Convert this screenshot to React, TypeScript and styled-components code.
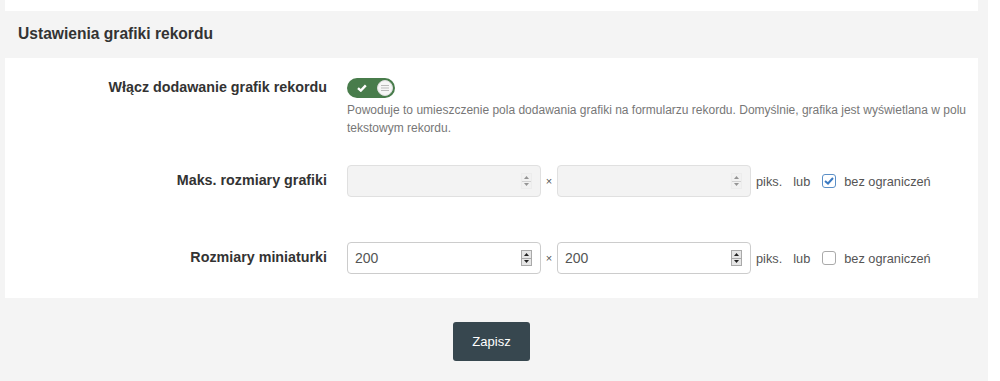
import styled, { createGlobalStyle } from 'styled-components';

const GlobalStyle = createGlobalStyle`
  html, body {
    margin: 0;
    padding: 0;
    background: #fff;
    font-family: "Liberation Sans", Arial, sans-serif;
  }
`;

const Page = styled.div`
  width: 988px;
  height: 381px;
  background: #f4f4f4;
  box-sizing: border-box;
  padding: 0 10px 0 5px;
`;

const TopPanel = styled.div`
  height: 11px;
  background: #fff;
`;

const SectionTitle = styled.h3`
  margin: 0;
  height: 47px;
  line-height: 45px;
  padding-left: 13px;
  font-size: 15.6px;
  font-weight: bold;
  color: #333;
`;

const Panel = styled.div`
  background: #fff;
  padding: 20px 10px 24px 0;
  display: grid;
  grid-template-columns: 342px 1fr;
`;

const Label = styled.div<{ $top: number }>`
  text-align: right;
  padding-right: 20px;
  padding-top: ${(p) => p.$top}px;
  font-size: 14.3px;
  font-weight: bold;
  color: #333;
`;

const Control = styled.div<{ $mt?: number }>`
  margin-top: ${(p) => p.$mt ?? 0}px;
`;

const Toggle = styled.div`
  width: 48px;
  height: 20px;
  border-radius: 10px;
  background: #487c4b;
  display: flex;
  align-items: center;
  justify-content: space-between;
  padding: 0 2px 0 10px;
  box-sizing: border-box;
`;

const Knob = styled.div`
  width: 16px;
  height: 16px;
  border-radius: 50%;
  background: #f6f6f6;
  border: 1px solid #ddd;
  box-sizing: border-box;
  display: flex;
  align-items: center;
  justify-content: center;
`;

const Help = styled.div`
  margin-top: 3px;
  font-size: 12px;
  line-height: 18px;
  color: #777;
  max-width: 622px;
`;

const SizeRow = styled.div`
  display: flex;
  align-items: center;
  font-size: 12.75px;
  color: #555;
`;

const InputBox = styled.div<{ $disabled?: boolean }>`
  width: 194px;
  height: 32px;
  box-sizing: border-box;
  border: 1px solid ${(p) => (p.$disabled ? '#e0e0e0' : '#ccc')};
  border-radius: 4px;
  background: ${(p) => (p.$disabled ? '#f3f3f3' : '#fff')};
  display: flex;
  align-items: center;
  padding: 0 8px 0 7px;
`;

const Field = styled.input`
  flex: 1;
  min-width: 0;
  border: none;
  outline: none;
  background: transparent;
  font-family: "Liberation Sans", Arial, sans-serif;
  font-size: 14px;
  color: #555;
  padding: 0;
`;

const Spinner = styled.div<{ $disabled?: boolean }>`
  width: 11px;
  height: 16px;
  box-sizing: border-box;
  border: 1px solid ${(p) => (p.$disabled ? '#e4e4e4' : '#a9a9a9')};
  background: ${(p) => (p.$disabled ? '#f0f0f0' : '#e6e6e6')};
  display: flex;
  flex-direction: column;
  opacity: ${(p) => (p.$disabled ? 0.45 : 1)};

  span {
    flex: 1;
    display: flex;
    align-items: center;
    justify-content: center;
  }

  span + span {
    border-top: 1px solid #a9a9a9;
  }
`;

const Times = styled.span`
  width: 16px;
  text-align: center;
  font-size: 11px;
  color: #555;
`;

const Unit = styled.span<{ $ml: number }>`
  margin-left: ${(p) => p.$ml}px;
`;

const Check = styled.div<{ $checked?: boolean }>`
  width: 14px;
  height: 14px;
  box-sizing: border-box;
  margin: 0 8px 0 12px;
  border: 1px solid ${(p) => (p.$checked ? '#5b8fc7' : '#aaa')};
  border-radius: 3px;
  background: #fff;
  display: flex;
  align-items: center;
  justify-content: center;
`;

const Footer = styled.div`
  display: flex;
  justify-content: center;
  padding-top: 24px;
`;

const SaveButton = styled.button`
  width: 77px;
  height: 39px;
  border: none;
  border-radius: 3px;
  background: #37474f;
  color: #fff;
  font-family: "Liberation Sans", Arial, sans-serif;
  font-size: 13px;
`;

function SpinnerIcon({ disabled }: { disabled?: boolean }) {
  return (
    <Spinner $disabled={disabled}>
      <span>
        <svg width="5" height="3" viewBox="0 0 5 3"><path d="M0 3 L2.5 0 L5 3 Z" fill="#222" /></svg>
      </span>
      <span>
        <svg width="5" height="3" viewBox="0 0 5 3"><path d="M0 0 L2.5 3 L5 0 Z" fill="#222" /></svg>
      </span>
    </Spinner>
  );
}

function SizeInputs({ value, disabled, unlimited }: { value: string; disabled?: boolean; unlimited?: boolean }) {
  return (
    <SizeRow>
      <InputBox $disabled={disabled}>
        <Field defaultValue={value} disabled={disabled} />
        <SpinnerIcon disabled={disabled} />
      </InputBox>
      <Times>×</Times>
      <InputBox $disabled={disabled}>
        <Field defaultValue={value} disabled={disabled} />
        <SpinnerIcon disabled={disabled} />
      </InputBox>
      <Unit $ml={5}>piks.</Unit>
      <Unit $ml={11}>lub</Unit>
      <Check $checked={unlimited}>
        {unlimited && (
          <svg width="10" height="8" viewBox="0 0 10 8">
            <path d="M1 4 L4 6.5 L9 1" stroke="#3b7ac2" strokeWidth="2" fill="none" />
          </svg>
        )}
      </Check>
      <span>bez ograniczeń</span>
    </SizeRow>
  );
}

export default function App() {
  return (
    <>
      <GlobalStyle />
      <Page>
        <TopPanel />
        <SectionTitle>Ustawienia grafiki rekordu</SectionTitle>
        <Panel>
          <Label $top={1}>Włącz dodawanie grafik rekordu</Label>
          <Control>
            <Toggle>
              <svg width="10" height="8" viewBox="0 0 10 8">
                <path d="M1 4.2 L3.8 6.6 L8.8 1.4" stroke="#fff" strokeWidth="2.4" fill="none" />
              </svg>
              <Knob>
                <svg width="8" height="6" viewBox="0 0 8 6">
                  <path d="M0 0.5 H8 M0 3 H8 M0 5.5 H8" stroke="#bbb" strokeWidth="1" />
                </svg>
              </Knob>
            </Toggle>
            <Help>
              Powoduje to umieszczenie pola dodawania grafiki na formularzu rekordu. Domyślnie, grafika jest wyświetlana w polu
              tekstowym rekordu.
            </Help>
          </Control>

          <Label $top={35}>Maks. rozmiary grafiki</Label>
          <Control $mt={28}>
            <SizeInputs value="" disabled unlimited />
          </Control>

          <Label $top={52}>Rozmiary miniaturki</Label>
          <Control $mt={45}>
            <SizeInputs value="200" />
          </Control>
        </Panel>
        <Footer>
          <SaveButton>Zapisz</SaveButton>
        </Footer>
      </Page>
    </>
  );
}
